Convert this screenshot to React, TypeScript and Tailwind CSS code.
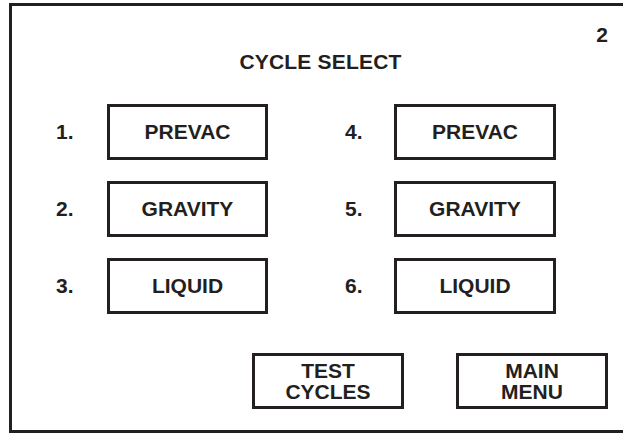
const rows = [
  { left: { num: "1.", label: "PREVAC" }, right: { num: "4.", label: "PREVAC" } },
  { left: { num: "2.", label: "GRAVITY" }, right: { num: "5.", label: "GRAVITY" } },
  { left: { num: "3.", label: "LIQUID" }, right: { num: "6.", label: "LIQUID" } },
];

const CycleButton = ({ label, className }: { label: string; className: string }) => (
  <div
    className={`h-[56px] flex items-center justify-center border-[3px] border-[#231f20] ${className}`}
  >
    {label}
  </div>
);

export default function App() {
  return (
    <div
      className="w-[623px] h-[433px] bg-white pt-[3px] pl-[9px] text-[#231f20] font-bold text-[21px] overflow-hidden"
      style={{ fontFamily: '"Liberation Sans", Arial, sans-serif' }}
    >
      <div className="h-[430px] border-l-[3px] border-t-[3px] border-b-[3px] border-[#231f20] flex flex-col">
        <div className="flex justify-end pr-[15px] pt-[17px] leading-[24px]">2</div>
        <div className="mt-[3px] text-center pl-[6px] leading-[24px] tracking-[0.2px]">
          CYCLE SELECT
        </div>

        <div className="mt-[30px] flex flex-col gap-[21px] pl-[44px]">
          {rows.map((row, i) => (
            <div key={i} className="flex items-center">
              <span className="w-[51px] leading-[24px]">{row.left.num}</span>
              <CycleButton label={row.left.label} className="w-[161px]" />
              <span className="ml-[77px] w-[49px] leading-[24px]">{row.right.num}</span>
              <CycleButton label={row.right.label} className="w-[162px]" />
            </div>
          ))}
        </div>

        <div className="mt-[39px] flex gap-[52px] pl-[240px]">
          <div className="w-[152px] h-[56px] flex flex-col items-center justify-center border-[3px] border-[#231f20] leading-[21px]">
            <span>TEST</span>
            <span>CYCLES</span>
          </div>
          <div className="w-[152px] h-[56px] flex flex-col items-center justify-center border-[3px] border-[#231f20] leading-[21px]">
            <span>MAIN</span>
            <span>MENU</span>
          </div>
        </div>
      </div>
    </div>
  );
}
